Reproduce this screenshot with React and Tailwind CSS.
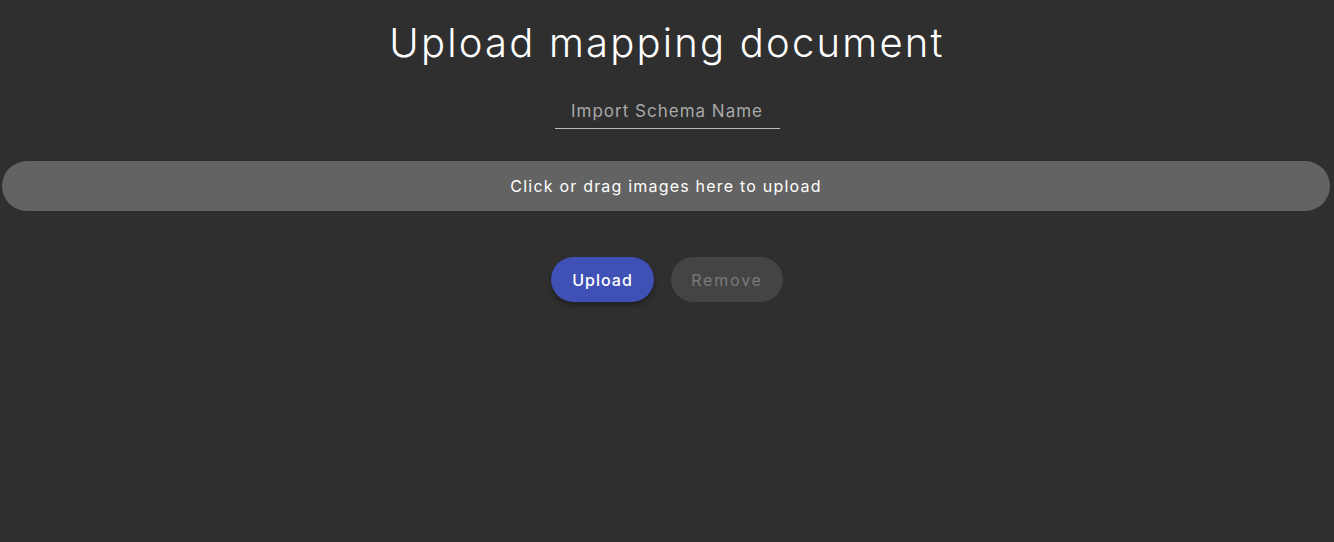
import React from 'react';

const App = () => (
    <div className="min-h-[542px] w-full bg-[#2f2f2f] font-['Inter',_'Noto_Sans',_sans-serif]">
        <div className="flex flex-col items-center pt-[17px]">
            <h1 className="text-[40px] leading-[52px] font-light text-white tracking-[2.2px]">
                Upload mapping document
            </h1>
            <div className="mt-[30px] w-[225px] border-b border-[#bdbdbd]">
                <input
                    type="text"
                    placeholder="Import Schema Name"
                    className="w-full bg-transparent pb-[5px] text-center text-[17px] leading-[24px] tracking-[1px] text-white placeholder:text-[#a8a8a8] outline-none"
                />
            </div>
            <div className="mt-[32px] self-stretch ml-[2px] mr-[4px] flex h-[50px] cursor-pointer items-center justify-center rounded-full bg-[#636363] text-[16px] tracking-[1.2px] text-white">
                Click or drag images here to upload
            </div>
            <div className="mt-[46px] flex gap-[17px]">
                <button className="h-[45px] w-[103px] rounded-full bg-[#3f51b5] text-[16px] font-medium tracking-[1px] text-white shadow-[0_3px_5px_rgba(0,0,0,0.35)]">
                    Upload
                </button>
                <button className="h-[45px] w-[112px] rounded-full bg-[#444444] text-[16px] tracking-[1.8px] text-[#7a7a7a]" disabled>
                    Remove
                </button>
            </div>
        </div>
    </div>
);

export default App;
